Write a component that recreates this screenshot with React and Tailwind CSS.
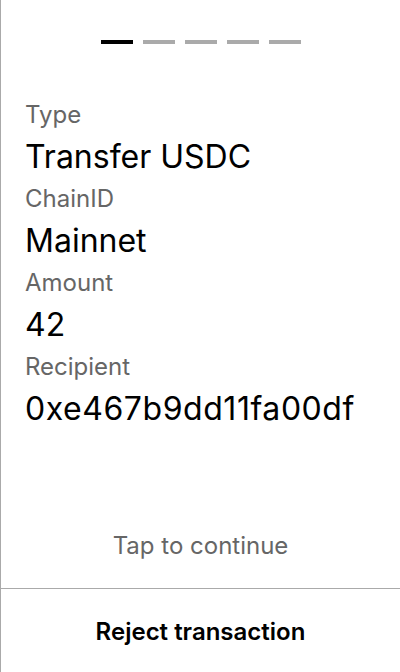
import React from 'react'

const fields = [
  { label: 'Type', value: 'Transfer USDC' },
  { label: 'ChainID', value: 'Mainnet' },
  { label: 'Amount', value: '42' },
  { label: 'Recipient', value: '0xe467b9dd11fa00df', mono: true },
]

export default function App() {
  return (
    <div
      className="h-[672px] w-[400px] flex flex-col bg-white border-l border-[#aaaaaa] text-black"
      style={{ fontFamily: 'Inter, "Noto Sans", sans-serif' }}
    >
      {/* Step indicator */}
      <div className="flex justify-center gap-[10px] pt-10">
        {[0, 1, 2, 3, 4].map((i) => (
          <div
            key={i}
            className={i === 0 ? 'w-8 h-1 bg-black' : 'w-8 h-1 bg-[#aaaaaa]'}
          />
        ))}
      </div>

      {/* Transaction details */}
      <div className="flex flex-col px-6 pt-[53px]">
        {fields.map((f) => (
          <div key={f.label} className="flex flex-col">
            <span className="text-[24px] leading-[36px] text-[#666666]">{f.label}</span>
            <span
              className={
                f.mono
                  ? 'text-[32px] leading-[48px] tracking-[0.55px]'
                  : 'text-[32px] leading-[48px]'
              }
            >
              {f.value}
            </span>
          </div>
        ))}
      </div>

      <div className="flex-1" />

      <div className="text-center text-[24px] leading-[36px] text-[#666666] pb-6">
        Tap to continue
      </div>

      <div className="h-[84px] pt-[3px] border-t border-[#aaaaaa] flex items-center justify-center">
        <span className="text-[24px] font-semibold">Reject transaction</span>
      </div>
    </div>
  )
}
